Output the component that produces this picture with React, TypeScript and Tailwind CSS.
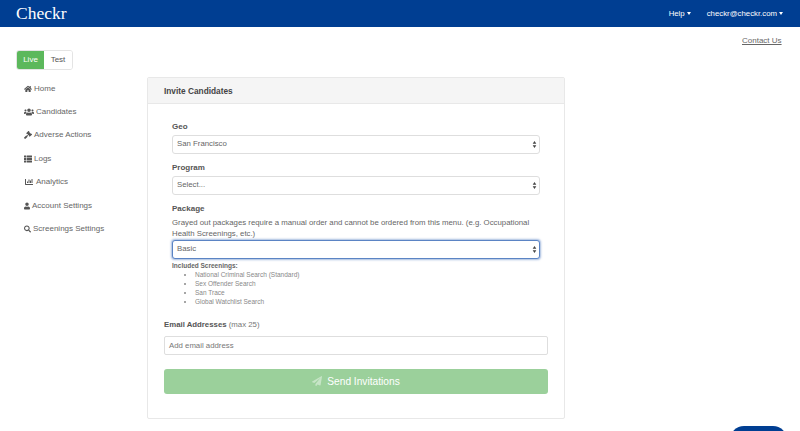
import React from 'react';
import { FaChartBar, FaGavel, FaHome, FaPaperPlane, FaSearch, FaThList, FaUser, FaUsers } from 'react-icons/fa';

const navItems = [
  { label: 'Home', icon: FaHome, iconSize: 'w-[8px]' },
  { label: 'Candidates', icon: FaUsers, iconSize: 'w-[10px]' },
  { label: 'Adverse Actions', icon: FaGavel, iconSize: 'w-[8px]' },
  { label: 'Logs', icon: FaThList, iconSize: 'w-[8px]' },
  { label: 'Analytics', icon: FaChartBar, iconSize: 'w-[10px]' },
  { label: 'Account Settings', icon: FaUser, iconSize: 'w-[6px]' },
  { label: 'Screenings Settings', icon: FaSearch, iconSize: 'w-[7px]' },
];

const screenings = [
  'National Criminal Search (Standard)',
  'Sex Offender Search',
  'San Trace',
  'Global Watchlist Search',
];

const Caret: React.FC = () => (
  <span className="ml-[2px] inline-block h-0 w-0 border-x-[2.5px] border-t-[3px] border-x-transparent border-t-white align-middle" />
);

const SelectBox: React.FC<{ value: string; focused?: boolean }> = ({ value, focused }) => (
  <div
    className={`flex h-[19px] w-[368px] items-center justify-between rounded-[3px] border bg-white pl-[4px] pr-[2px] text-[7.8px] text-[#666] ${
      focused ? 'border-[#5b84c4] shadow-[0_0_2px_1px_rgba(91,132,196,0.55)]' : 'border-[#dedede]'
    }`}
  >
    <span>{value}</span>
    <svg viewBox="0 0 6 10" className="h-[7px] w-[5px] fill-[#444]">
      <path d="M3 0 5.6 4H.4zM3 10 .4 6h5.2z" />
    </svg>
  </div>
);

const FieldLabel: React.FC<{ children: React.ReactNode }> = ({ children }) => (
  <div className="text-[8px] font-bold leading-[10px] text-[#555]">{children}</div>
);

export default function App() {
  return (
    <div className="relative h-[431px] w-[800px] overflow-hidden bg-white font-['Liberation_Sans',Arial,sans-serif]">
      <header className="flex h-[27px] items-center justify-between bg-[#003e92] pl-[16px] pr-[17px] text-white">
        <div className="font-['Liberation_Serif',serif] text-[17.5px] leading-none">Checkr</div>
        <div className="flex items-center gap-[16px] text-[7.8px]">
          <span>
            Help
            <Caret />
          </span>
          <span>
            checkr@checkr.com
            <Caret />
          </span>
        </div>
      </header>

      <div className="flex">
        <aside className="w-[147px] shrink-0 pt-[23px]">
          <div className="ml-[16px] flex h-[20px] w-[57px] overflow-hidden rounded-[3px] border border-[#e4e4e4] text-[8px]">
            <div className="flex w-[27px] items-center justify-center bg-[#5cb85c] text-white">Live</div>
            <div className="flex flex-1 items-center justify-center bg-white text-[#555]">Test</div>
          </div>
          <nav className="mt-[7px] flex flex-col pl-[24px]">
            {navItems.map(({ label, icon: Icon, iconSize }) => (
              <div key={label} className="flex h-[23.4px] items-center gap-[2px] text-[8px] text-[#666]">
                <Icon className={`${iconSize} shrink-0 text-[#555]`} />
                <span>{label}</span>
              </div>
            ))}
          </nav>
        </aside>

        <main className="relative flex-1 pt-[50px]">
          <a className="absolute left-[595px] top-[8px] text-[8px] text-[#666] underline">Contact Us</a>
          <section className="h-[342px] w-[418px] rounded-[2px] border border-[#e8e8e8]">
            <div className="flex h-[26px] items-center border-b border-[#e8e8e8] bg-[#f5f5f5] pl-[16px] pt-[1px] text-[8.3px] font-bold text-[#444]">
              Invite Candidates
            </div>
            <div className="px-[16px] pt-[18px]">
              <div className="flex flex-col pl-[8px]">
                <FieldLabel>Geo</FieldLabel>
                <div className="mt-[2.5px]">
                  <SelectBox value="San Francisco" />
                </div>
                <div className="mt-[9.5px]">
                  <FieldLabel>Program</FieldLabel>
                </div>
                <div className="mt-[2.5px]">
                  <SelectBox value="Select..." />
                </div>
                <div className="mt-[9px]">
                  <FieldLabel>Package</FieldLabel>
                </div>
                <p className="mt-[3px] w-[368px] text-[7.8px] leading-[11.5px] text-[#666]">
                  Grayed out packages require a manual order and cannot be ordered from this menu. (e.g. Occupational
                  Health Screenings, etc.)
                </p>
                <SelectBox value="Basic" focused />
                <div className="mt-[2px] text-[6.5px] font-bold leading-[9px] text-[#666]">Included Screenings:</div>
                <ul className="list-disc pl-[23px] text-[6.5px] leading-[9px] text-[#888]">
                  {screenings.map((item) => (
                    <li key={item}>{item}</li>
                  ))}
                </ul>
              </div>

              <div className="mt-[14.5px] text-[7.8px] leading-[10px] text-[#777]">
                <b className="text-[#555]">Email Addresses</b> (max 25)
              </div>
              <div className="mt-[6px] flex h-[19px] w-[384px] items-center rounded-[2px] border border-[#dedede] bg-white pl-[4px] text-[7.8px] text-[#777]">
                Add email address
              </div>
              <button className="mt-[14px] flex h-[25px] w-[384px] items-center justify-center gap-[5px] rounded-[3px] bg-[#9bd09b] text-[10.2px] text-white">
                <FaPaperPlane className="w-[10px] text-[#c6e4c6]" />
                Send Invitations
              </button>
            </div>
          </section>
        </main>
      </div>

      <div className="absolute left-[730px] top-[426px] h-[20px] w-[57px] rounded-t-[14px] bg-[#003e92]" />
    </div>
  );
}
